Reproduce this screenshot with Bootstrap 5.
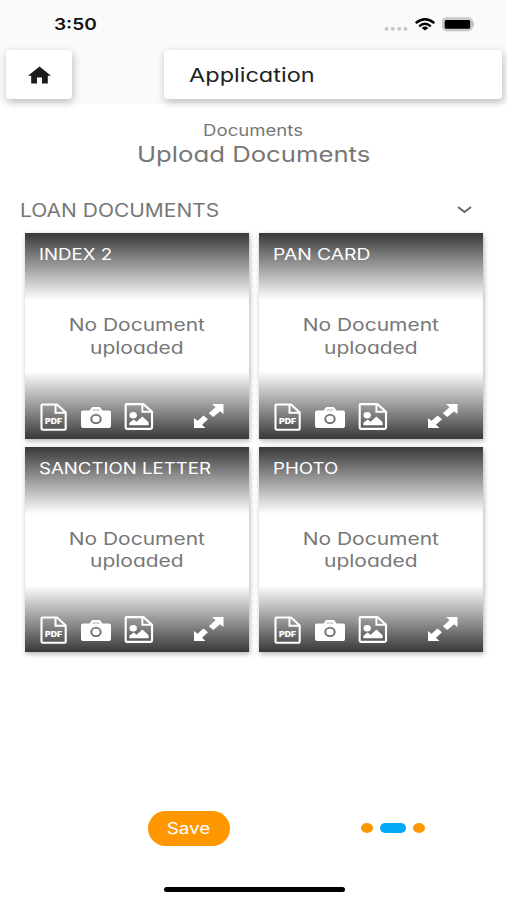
<!DOCTYPE html>
<html lang="en">
<head>
<meta charset="utf-8">
<meta name="viewport" content="width=device-width, initial-scale=1">
<title>Upload Documents</title>
<link rel="stylesheet" href="https://cdn.jsdelivr.net/npm/bootstrap@5.3.0/dist/css/bootstrap.min.css">
<style>
body{font-family:Inter,"Liberation Sans",sans-serif;font-feature-settings:"cv11";color:#777;background:#fff;height:900px;overflow:hidden}
svg{display:block;flex:none}
/* wide lettering: --w stretches each label horizontally */
.wide{display:inline-block;white-space:nowrap;transform:scaleX(var(--w,1.18));transform-origin:0 50%}
.mid{transform-origin:50% 50%}
.top-area{height:104px;background:#fafafa}
.status{height:50px;padding:0 33px 0 53.5px}
.clock{font-size:16px;font-weight:600;color:#111;line-height:49px;--w:1.19}
.tile{height:49px;border-radius:4px;background:#fff;box-shadow:1px 3px 9px rgba(0,0,0,.25)}
.home{width:66px}
.app-title{width:338px;padding-left:25px;font-size:19.3px;line-height:51px;color:#222;font-weight:400;--w:1.22}
.bar-pad{padding:0 5px 0 6px}
.sub{font-size:16px;line-height:20px;padding-top:16px;--w:1.16}
.head{font-size:21.5px;line-height:28px;--w:1.195}
.section-row{height:46px;padding:0 34px 0 20px;margin-top:19px}
.section-name{font-size:18px;line-height:46px;--w:1.165;padding-top:1px}
.docs{display:grid;grid-template-columns:224px 224px;gap:8px 10px;margin-left:25px}
.doc{height:205.5px;background:linear-gradient(#383838,#fff 67px,#fff 138px,#383838);box-shadow:1px 2px 5px rgba(0,0,0,.3)}
.doc-name{height:68px;padding:11px 0 0 13.5px;font-size:15.8px;line-height:22px;color:#fff}
.doc-msg{height:90px;padding-top:13px;font-size:17.2px;line-height:22.5px;--w:1.22}
.tools{padding:11.500px 0 0 15px}
.gap-cam{margin-left:14px}
.gap-pic{margin-left:13px}
.gap-grow{margin-left:40px}
.pdf-label{font-size:7.2px;font-weight:900}
.foot{height:36px;margin-top:158px;padding-left:148px}
.save{width:82px;height:35px;border-radius:18px;background:#ff9800;color:#fff;font-size:16px;line-height:35px;padding:0;border:0}
.dots{margin-left:131px;gap:7px}
.dot{width:12px;height:10px;border-radius:50%;background:#ff9800}
.dot-on{width:26px;border-radius:5px;background:#03a9f4}
.home-line{width:181px;height:5px;border-radius:3px;background:#000;margin:41px 0 0 164px}
.w-pan{--w:1.22}
</style>
</head>
<body>
<svg width="0" height="0" class="position-absolute" aria-hidden="true">
<symbol id="pdf" viewBox="0 0 27 28"><path d="M2.200 1.500H17L25.700 9.500V25.500Q25.700 26.800 24.500 26.800H3Q1.500 26.800 1.500 25.500V2.500Q1.500 1.500 2.500 1.500Z" fill="none" stroke="#fff" stroke-width="2.100"/><path d="M15.500 2V9.800H25" fill="none" stroke="#fff" stroke-width="2"/></symbol>
<symbol id="cam" viewBox="0 0 30 22"><path fill="#fff" fill-rule="evenodd" d="M2 4H8.500L10.500 1.200Q11 .5 12 .5H18Q19 .5 19.500 1.200L21.500 4H28Q30 4 30 6V19.500Q30 21.500 28 21.500H2Q0 21.500 0 19.500V6Q0 4 2 4ZM15 7.200A5.700 5.200 0 1 0 15 17.600A5.700 5.200 0 1 0 15 7.200ZM15 9.200A3.700 3.300 0 1 1 15 15.800A3.700 3.300 0 1 1 15 9.200Z"/><path d="M11.500 3.500H18.500" stroke="#aaa" stroke-width=".9"/></symbol>
<symbol id="pic" viewBox="0 0 30 28"><path d="M2 1.200H19.500L28.500 9V25.500Q28.500 26.800 27 26.800H2.500Q1.200 26.800 1.200 25.500V2Q1.200 1.200 2 1.200Z" fill="none" stroke="#fff" stroke-width="2.200"/><path d="M18.500 1.500V9H28" fill="none" stroke="#fff" stroke-width="2"/><ellipse cx="9" cy="12.700" rx="3.800" ry="3.300" fill="#fff"/><path d="M5 23.200V20.500L9.500 17.200L12.500 19.500L18.500 14L25 20V23.200Z" fill="#fff"/></symbol>
<symbol id="grow" viewBox="0 0 30 24"><path fill="#fff" d="M18 0H29.500V10L26 7.300L19.300 13L14.800 9.200L21.500 3.300Z"/><path fill="#fff" d="M11.500 24H0V14L3.600 16.700L9.500 11.500L14 15.300L8 20.700Z"/></symbol>
</svg>

<header class="top-area">
  <div class="status d-flex justify-content-between">
    <span class="wide clock">3:50</span>
    <svg width="91" height="50" viewBox="383 0 91 50"><g fill="#c4c4c4"><circle cx="386.500" cy="28.800" r="1.900"/><circle cx="392.800" cy="28.800" r="1.900"/><circle cx="399.200" cy="28.800" r="1.900"/><circle cx="405.500" cy="28.800" r="1.900"/></g><g fill="none" stroke="#000" stroke-width="2.400"><path d="M415.700 23.200Q425 15.500 434.300 23.200"/><path d="M419.200 26.300Q425 21.300 430.800 26.300"/></g><path d="M421.700 28Q425 25.200 428.300 28L425 30.600Z"/><rect x="442.700" y="17.900" width="29.600" height="12.600" rx="4" fill="#ccc" stroke="#c4c4c4" stroke-width="1.300"/><rect x="444.700" y="20" width="25.500" height="8.700" rx="1.500" fill="#000"/><path d="M473 22.500Q475.500 24 473 26Z" fill="#aaa"/></svg>
  </div>
  <div class="bar-pad d-flex justify-content-between">
    <div class="tile home d-flex align-items-center justify-content-center"><svg width="23" height="18" viewBox="0 0 23 18"><path fill="#1c1c1c" d="M11.500.5L23 9.700H19.800V17.500H14V11.500H9V17.500H3.200V9.700H0Z"/></svg></div>
    <div class="tile app-title"><span class="wide">Application</span></div>
  </div>
</header>

<main>
  <div class="text-center">
    <div class="sub"><span class="wide mid">Documents</span></div>
    <div class="head"><span class="wide mid">Upload Documents</span></div>
  </div>
  <div class="section-row d-flex justify-content-between align-items-center">
    <span class="wide section-name">LOAN DOCUMENTS</span>
    <svg width="17" height="10" viewBox="0 0 17 10"><path d="M2 2L8.500 7L15 2" fill="none" stroke="#666" stroke-width="1.900"/></svg>
  </div>
  <div class="docs">
    <section class="doc"><div class="doc-name"><span class="wide">INDEX 2</span></div><div class="doc-msg text-center"><span class="wide mid">No Document<br>uploaded</span></div>
      <div class="tools d-flex"><svg width="27" height="28"><use href="#pdf"/><text class="pdf-label" x="5" y="20.500" textLength="17" lengthAdjust="spacingAndGlyphs" fill="#fff">PDF</text></svg><svg class="gap-cam" width="30" height="29"><use href="#cam"/></svg><svg class="gap-pic" width="30" height="27"><use href="#pic"/></svg><svg class="gap-grow" width="30" height="26"><use href="#grow"/></svg></div></section>
    <section class="doc"><div class="doc-name"><span class="wide w-pan">PAN CARD</span></div><div class="doc-msg text-center"><span class="wide mid">No Document<br>uploaded</span></div>
      <div class="tools d-flex"><svg width="27" height="28"><use href="#pdf"/><text class="pdf-label" x="5" y="20.500" textLength="17" lengthAdjust="spacingAndGlyphs" fill="#fff">PDF</text></svg><svg class="gap-cam" width="30" height="29"><use href="#cam"/></svg><svg class="gap-pic" width="30" height="27"><use href="#pic"/></svg><svg class="gap-grow" width="30" height="26"><use href="#grow"/></svg></div></section>
    <section class="doc"><div class="doc-name"><span class="wide">SANCTION LETTER</span></div><div class="doc-msg text-center"><span class="wide mid">No Document<br>uploaded</span></div>
      <div class="tools d-flex"><svg width="27" height="28"><use href="#pdf"/><text class="pdf-label" x="5" y="20.500" textLength="17" lengthAdjust="spacingAndGlyphs" fill="#fff">PDF</text></svg><svg class="gap-cam" width="30" height="29"><use href="#cam"/></svg><svg class="gap-pic" width="30" height="27"><use href="#pic"/></svg><svg class="gap-grow" width="30" height="26"><use href="#grow"/></svg></div></section>
    <section class="doc"><div class="doc-name"><span class="wide">PHOTO</span></div><div class="doc-msg text-center"><span class="wide mid">No Document<br>uploaded</span></div>
      <div class="tools d-flex"><svg width="27" height="28"><use href="#pdf"/><text class="pdf-label" x="5" y="20.500" textLength="17" lengthAdjust="spacingAndGlyphs" fill="#fff">PDF</text></svg><svg class="gap-cam" width="30" height="29"><use href="#cam"/></svg><svg class="gap-pic" width="30" height="27"><use href="#pic"/></svg><svg class="gap-grow" width="30" height="26"><use href="#grow"/></svg></div></section>
  </div>
</main>
<footer>
  <div class="foot d-flex align-items-center">
    <button class="btn save" type="button"><span class="wide mid">Save</span></button>
    <div class="dots d-flex"><span class="dot"></span><span class="dot dot-on"></span><span class="dot"></span></div>
  </div>
  <div class="home-line"></div>
</footer>
<script src="https://cdn.jsdelivr.net/npm/bootstrap@5.3.0/dist/js/bootstrap.bundle.min.js"></script>
</body>
</html>
